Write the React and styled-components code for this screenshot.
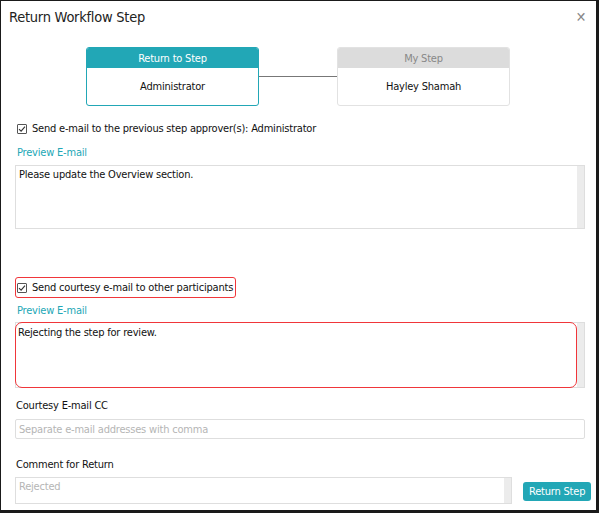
import React from "react";
import styled, { createGlobalStyle } from "styled-components";

const teal = "#22a7b6";
const font = `"DejaVu Sans Condensed", "DejaVu Sans", Verdana, sans-serif`;

const Global = createGlobalStyle`
  html, body { margin: 0; padding: 0; background: #fff; }
  * { box-sizing: border-box; }
`;

const Dialog = styled.div`
  width: 599px;
  height: 513px;
  background: #fff;
  border-top: 1px solid #1a1a1a;
  border-left: 1px solid #1a1a1a;
  border-right: 3px solid #1a1a1a;
  border-bottom: 3px solid #1a1a1a;
  font-family: ${font};
  font-size: 11px;
  letter-spacing: -0.2px;
  color: #111;
  display: flex;
  flex-direction: column;
`;

const Header = styled.div`
  display: flex;
  justify-content: space-between;
  align-items: flex-start;
  padding: 7px 10px 0 8px;
  height: 46px;
`;

const Title = styled.div`
  font-size: 14.5px;
  letter-spacing: -0.25px;
  color: #222;
  line-height: 18px;
`;

const Close = styled.div`
  color: #888;
  font-size: 14px;
  line-height: 12px;
  margin-top: 3px;
`;

const Steps = styled.div`
  display: flex;
  justify-content: center;
  align-items: center;
  padding-left: 1px;
  padding-right: 2px;
`;

const StepBox = styled.div`
  width: 173px;
  height: 59px;
  border: 1px solid ${(p) => (p.$active ? teal : "#e2e2e2")};
  border-radius: 3px;
  overflow: hidden;
  display: flex;
  flex-direction: column;
`;

const StepHead = styled.div`
  height: 20px;
  background: ${(p) => (p.$active ? teal : "#dcdcdc")};
  color: ${(p) => (p.$active ? "#fff" : "#888")};
  display: flex;
  align-items: center;
  justify-content: center;
  font-size: 11px;
`;

const StepBody = styled.div`
  flex: 1;
  display: flex;
  align-items: center;
  justify-content: center;
  color: #111;
  font-size: 11px;
`;

const Connector = styled.div`
  width: 78px;
  height: 1px;
  background: #777;
`;

const Form = styled.div`
  padding: 0 11px 0 14px;
  display: flex;
  flex-direction: column;
`;

const CheckRow = styled.label`
  display: inline-flex;
  align-items: center;
  gap: 5px;
  align-self: flex-start;
  height: 21px;
  padding: 0 2px 0 1px;
  margin-top: ${(p) => p.$mt || 0}px;
  border: 1.5px solid ${(p) => (p.$flag ? "#f0363a" : "transparent")};
  border-radius: 3px;
  color: #111;
  font-size: 11px;
`;

const Box = styled.span`
  width: 10px;
  height: 10px;
  border: 1px solid #555;
  border-radius: 1px;
  display: inline-flex;
  align-items: center;
  justify-content: center;
`;

const PreviewLabel = styled.div`
  color: ${teal};
  font-size: 11px;
  line-height: 14px;
  margin-top: ${(p) => p.$mt || 0}px;
  padding-left: 2px;
`;

const Field = styled.div`
  display: flex;
  flex-shrink: ${(p) => (p.$w ? 0 : 1)};
  height: ${(p) => p.$h}px;
  width: ${(p) => (p.$w ? `${p.$w}px` : "100%")};
  border: 1px solid #dedede;
  margin-top: ${(p) => p.$mt || 0}px;
  background: #fff;
`;

const FieldText = styled.div`
  flex: 1;
  color: ${(p) => (p.$placeholder ? "#b5b5b5" : "#111")};
  font-size: 11px;
  line-height: 14px;
  border: ${(p) => (p.$flag ? "1.5px solid #f0363a" : "none")};
  border-radius: ${(p) => (p.$flag ? "7px" : "0")};
  margin: ${(p) => (p.$flag ? "-1px 0 -1px -1px" : "0")};
  padding: ${(p) => (p.$flag ? "3px 2px" : "2px 3px")};
`;

const Track = styled.div`
  width: 7px;
  background: #ececec;
`;

const FieldLabel = styled.div`
  font-size: 11px;
  color: #111;
  line-height: 14px;
  margin-top: ${(p) => p.$mt || 0}px;
  padding-left: 1px;
`;

const Input = styled.div`
  height: 20px;
  border: 1px solid #dedede;
  border-radius: 2px;
  margin-top: 6px;
  padding: 0 3px;
  display: flex;
  align-items: center;
  color: #b5b5b5;
  font-size: 11px;
`;

const BottomRow = styled.div`
  display: flex;
  align-items: center;
  gap: 11px;
  margin-top: 5px;
`;

const Button = styled.button`
  flex-shrink: 0;
  white-space: nowrap;
  height: 19px;
  padding: 0 6px;
  background: ${teal};
  color: #fff;
  border: none;
  border-radius: 3px;
  font-family: ${font};
  font-size: 11px;
  letter-spacing: -0.2px;
  margin-top: 1px;
`;

const Check = () => (
  <Box>
    <svg width="8" height="8" viewBox="0 0 8 8">
      <path d="M1 4.2 L3.1 6.2 L7 1.6" fill="none" stroke="#333" strokeWidth="1.1" />
    </svg>
  </Box>
);

export default function App() {
  return (
    <>
      <Global />
      <Dialog>
        <Header>
          <Title>Return Workflow Step</Title>
          <Close>✕</Close>
        </Header>
        <Steps>
          <StepBox $active>
            <StepHead $active>Return to Step</StepHead>
            <StepBody>Administrator</StepBody>
          </StepBox>
          <Connector />
          <StepBox>
            <StepHead>My Step</StepHead>
            <StepBody>Hayley Shamah</StepBody>
          </StepBox>
        </Steps>
        <Form>
          <CheckRow $mt={12}>
            <Check />
            Send e-mail to the previous step approver(s): Administrator
          </CheckRow>
          <PreviewLabel $mt={7}>Preview E-mail</PreviewLabel>
          <Field $h={64} $mt={5}>
            <FieldText>Please update the Overview section.</FieldText>
            <Track />
          </Field>
          <CheckRow $mt={48} $flag>
            <Check />
            Send courtesy e-mail to other participants
          </CheckRow>
          <PreviewLabel $mt={6}>Preview E-mail</PreviewLabel>
          <Field $h={66} $mt={4}>
            <FieldText $flag>Rejecting the step for review.</FieldText>
            <Track />
          </Field>
          <FieldLabel $mt={11}>Courtesy E-mail CC</FieldLabel>
          <Input>Separate e-mail addresses with comma</Input>
          <FieldLabel $mt={19}>Comment for Return</FieldLabel>
          <BottomRow>
            <Field $h={27} $w={497}>
              <FieldText $placeholder>Rejected</FieldText>
              <Track />
            </Field>
            <Button>Return Step</Button>
          </BottomRow>
        </Form>
      </Dialog>
    </>
  );
}
